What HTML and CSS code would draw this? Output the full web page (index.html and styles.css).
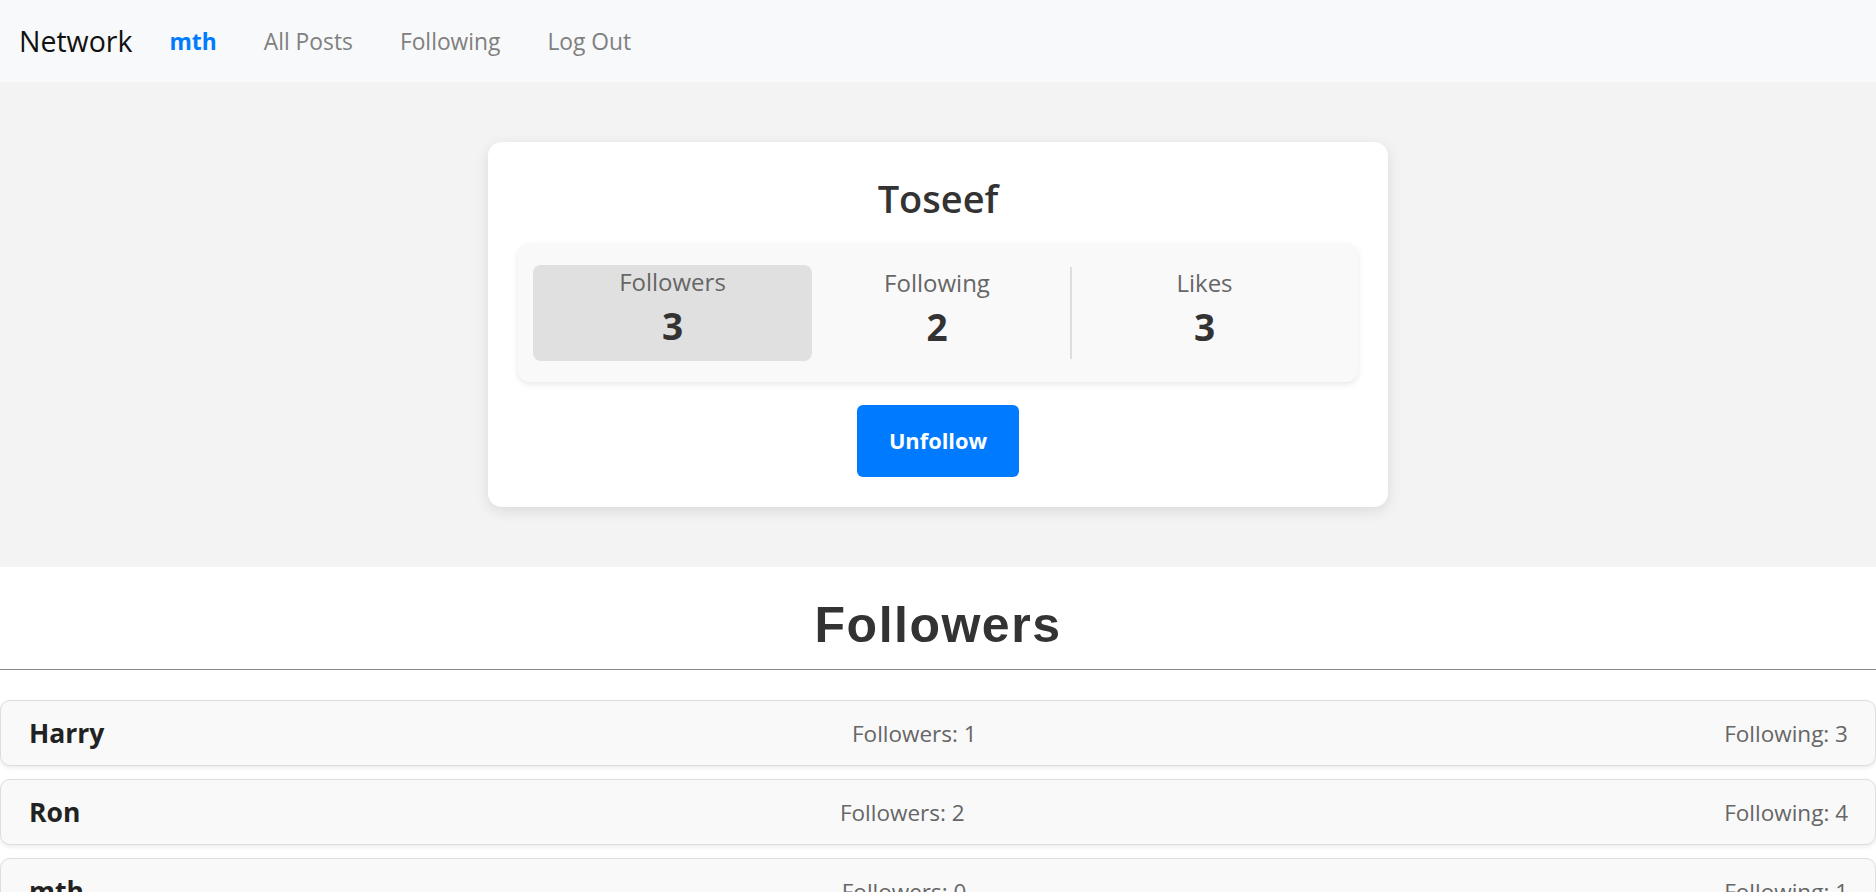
FILE: index.html
```html
<!DOCTYPE html>
<html lang="en">
<head>
<meta charset="utf-8">
<title>Network</title>
<link rel="stylesheet" href="styles.css">
</head>
<body>
<nav class="navbar">
  <a class="brand" href="#">Network</a>
  <div class="nav-links">
    <a class="nav-link active" href="#">mth</a>
    <a class="nav-link" href="#">All Posts</a>
    <a class="nav-link" href="#">Following</a>
    <a class="nav-link" href="#">Log Out</a>
  </div>
</nav>

<section class="profile-section">
  <div class="profile-card">
    <h2 class="profile-name">Toseef</h2>
    <div class="stats">
      <div class="stat stat-active">
        <div class="stat-label">Followers</div>
        <div class="stat-value">3</div>
      </div>
      <div class="stat stat-following">
        <div class="stat-label">Following</div>
        <div class="stat-value">2</div>
      </div>
      <div class="stat stat-likes">
        <div class="stat-label">Likes</div>
        <div class="stat-value">3</div>
      </div>
    </div>
    <button class="follow-btn" type="button">Unfollow</button>
  </div>
</section>

<section class="list-section">
  <h1 class="list-title">Followers</h1>
  <div class="user-list">
    <div class="user-row">
      <span class="user-name">Harry</span>
      <span class="user-stat">Followers: 1</span>
      <span class="user-stat">Following: 3</span>
    </div>
    <div class="user-row">
      <span class="user-name">Ron</span>
      <span class="user-stat">Followers: 2</span>
      <span class="user-stat">Following: 4</span>
    </div>
    <div class="user-row">
      <span class="user-name">mth</span>
      <span class="user-stat">Followers: 0</span>
      <span class="user-stat">Following: 1</span>
    </div>
  </div>
</section>
</body>
</html>
```

FILE: styles.css
```css
* {
  box-sizing: border-box;
}

html, body {
  margin: 0;
  padding: 0;
}

body {
  font-family: "Open Sans", "Noto Sans", sans-serif;
  background: #ffffff;
  color: #212529;
}

a {
  text-decoration: none;
}

/* Navbar */
.navbar {
  height: 82px;
  background: #f8f9fa;
  display: flex;
  align-items: center;
  padding-left: 19px;
}

.brand {
  font-size: 28.5px;
  line-height: 1.2;
  color: #111111;
  margin-right: 37px;
}

.nav-links {
  display: flex;
  align-items: center;
  gap: 47px;
  padding-top: 2px;
}

.nav-link {
  font-size: 22.8px;
  line-height: 1.2;
  color: #808080;
}

.nav-link.active {
  color: #007bff;
  font-weight: 700;
}

/* Profile */
.profile-section {
  background: #f3f3f3;
  padding: 60px 0;
  display: flex;
  justify-content: center;
}

.profile-card {
  width: 900px;
  background: #ffffff;
  border-radius: 14px;
  box-shadow: 0 4px 14px rgba(0, 0, 0, 0.1);
  padding: 32px 30px 30px;
  display: flex;
  flex-direction: column;
  align-items: center;
}

.profile-name {
  margin: 0 0 22px;
  font-size: 38px;
  line-height: 48px;
  font-weight: 600;
  color: #333333;
}

.stats {
  align-self: stretch;
  display: flex;
  background: #f9f9f9;
  border-radius: 12px;
  box-shadow: 0 2px 6px rgba(0, 0, 0, 0.1);
  padding: 21px 15px;
}

.stat {
  display: flex;
  flex-direction: column;
  align-items: center;
  padding: 3px 0 12px;
}

.stat-active {
  width: 279px;
  background: #e0e0e0;
  border-radius: 8px;
}

.stat-following {
  width: 250px;
  padding-top: 4px;
}

.stat-likes {
  flex: 1;
  margin: 2px 0 2px 8px;
  padding: 2px 6px 10px 0;
  border-left: 2px solid #dddddd;
}

.stat-label {
  font-size: 24px;
  line-height: 28px;
  color: #666666;
  margin-bottom: 8px;
}

.stat-value {
  font-size: 37px;
  line-height: 44px;
  font-weight: 700;
  color: #333333;
}

.follow-btn {
  margin-top: 23px;
  height: 72px;
  padding: 0 32px;
  border: none;
  border-radius: 6px;
  background: #007bff;
  color: #ffffff;
  font-family: "Open Sans", "Noto Sans", sans-serif;
  font-size: 21.8px;
  font-weight: 700;
  line-height: 1;
}

/* Followers list */
.list-section {
  background: #ffffff;
}

.list-title {
  margin: 0;
  padding: 28px 0 14px;
  font-family: "Liberation Sans", Arial, sans-serif;
  font-size: 50px;
  line-height: 60px;
  font-weight: 700;
  letter-spacing: 1.5px;
  text-align: center;
  color: #333333;
  border-bottom: 1px solid #888888;
}

.user-list {
  display: flex;
  flex-direction: column;
  gap: 13px;
  padding-top: 30px;
}

.user-row {
  height: 66px;
  display: flex;
  align-items: center;
  justify-content: space-between;
  padding: 0 27px 0 28px;
  background: #f9f9f9;
  border: 1px solid #dddddd;
  border-radius: 10px;
  box-shadow: 0 2px 4px rgba(0, 0, 0, 0.08);
}

.user-name {
  font-size: 26.5px;
  font-weight: 700;
  color: #222222;
}

.user-stat {
  font-size: 22.5px;
  color: #666666;
}
```
